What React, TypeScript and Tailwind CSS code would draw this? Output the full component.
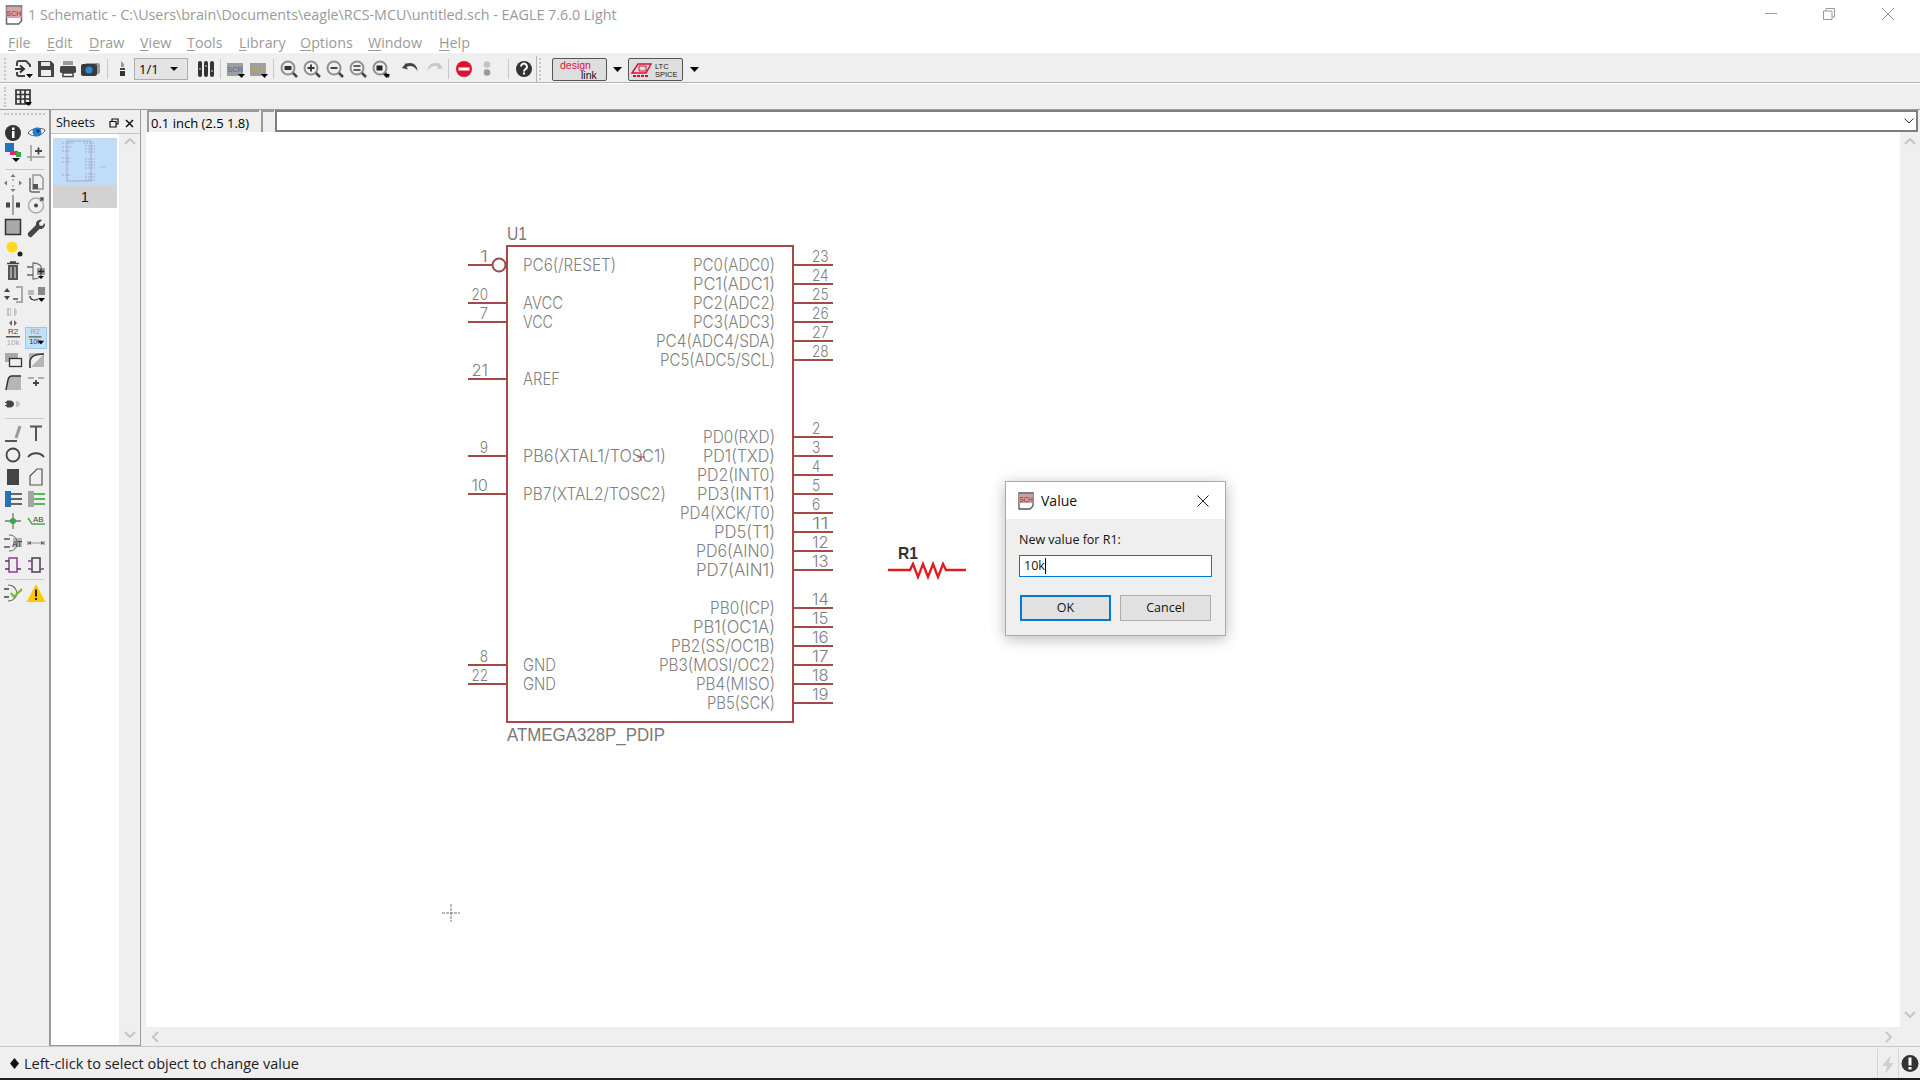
import React from 'react';

const ui = "font-['Open_Sans','Noto_Sans',sans-serif]";
const vec = "font-['Liberation_Sans',sans-serif]";
const thin = "font-['Inter','Liberation_Sans',sans-serif] font-light";

const leftLabels: [string, number, number][] = [
  ['PC6(/RESET)', 265, 93],
  ['AVCC', 303, 40],
  ['VCC', 322, 30],
  ['AREF', 379, 37],
  ['PB6(XTAL1/TOSC1)', 456, 143],
  ['PB7(XTAL2/TOSC2)', 494, 143],
  ['GND', 665, 33],
  ['GND', 684, 33],
];

const rightLabels: [string, number, number][] = [
  ['PC0(ADC0)', 265, 82],
  ['PC1(ADC1)', 284, 82],
  ['PC2(ADC2)', 303, 82],
  ['PC3(ADC3)', 322, 82],
  ['PC4(ADC4/SDA)', 341, 119],
  ['PC5(ADC5/SCL)', 360, 115],
  ['PD0(RXD)', 437, 72],
  ['PD1(TXD)', 456, 72],
  ['PD2(INT0)', 475, 78],
  ['PD3(INT1)', 494, 78],
  ['PD4(XCK/T0)', 513, 95],
  ['PD5(T1)', 532, 61],
  ['PD6(AIN0)', 551, 79],
  ['PD7(AIN1)', 570, 79],
  ['PB0(ICP)', 608, 65],
  ['PB1(OC1A)', 627, 82],
  ['PB2(SS/OC1B)', 646, 104],
  ['PB3(MOSI/OC2)', 665, 116],
  ['PB4(MISO)', 684, 79],
  ['PB5(SCK)', 703, 68],
];

const leftPins: [string, number][] = [
  ['1', 265], ['20', 303], ['7', 322], ['21', 379], ['9', 456], ['10', 494], ['8', 665], ['22', 684],
];

const rightPins: [string, number][] = [
  ['23', 265], ['24', 284], ['25', 303], ['26', 322], ['27', 341], ['28', 360],
  ['2', 437], ['3', 456], ['4', 475], ['5', 494], ['6', 513], ['11', 532], ['12', 551], ['13', 570],
  ['14', 608], ['15', 627], ['16', 646], ['17', 665], ['18', 684], ['19', 703],
];

const Ic = ({ children }: { children: React.ReactNode }) => (
  <svg width="22" height="22" viewBox="0 0 22 22" fill="none">
    {children}
  </svg>
);

const Drop = () => <path d="M13 16h7l-3.500 4z" fill="#000" />;

const Sep = () => <div className="w-px h-[20px] bg-[#c9c9c9] ml-[3px]" />;

const Cell = ({ children, className = '' }: { children: React.ReactNode; className?: string }) => (
  <div className={`w-[23px] h-[23px] flex items-center justify-center shrink-0 ${className}`}>{children}</div>
);

const ZoomIcon = ({ kind }: { kind: 'fit' | 'in' | 'out' | 'sel' | 'last' }) => (
  <Ic>
    <circle cx="10" cy="10" r="6.500" stroke="#8f8f8f" strokeWidth="2" />
    <path d="M15 15l4 4" stroke="#444" strokeWidth="2.500" />
    {kind === 'fit' && <rect x="6.500" y="8" width="7" height="4" fill="#333" />}
    {kind === 'in' && <path d="M6.500 10h7M10 6.500v7" stroke="#333" strokeWidth="1.800" />}
    {kind === 'out' && <path d="M6.500 10h7" stroke="#333" strokeWidth="1.800" />}
    {kind === 'sel' && <path d="M6.500 8h7M6.500 12h7" stroke="#333" strokeWidth="1.500" />}
    {kind === 'last' && (
      <>
        <rect x="6.500" y="7.500" width="6" height="5" fill="#222" />
        <Drop />
      </>
    )}
  </Ic>
);

const TopToolbar = () => (
  <div className="h-[29px] pt-[2px] bg-[#efefef] border-b border-[#b4b4b4] flex items-center pl-[4px]">
    <div className="w-[2px] h-[22px] border-l-2 border-dotted border-[#c6c6c6] mr-[6px]" />
    <Cell>
      <Ic>
        <path d="M4 8V5a2 2 0 0 1 2-2h7l4 4v2M4 14v2a2 2 0 0 0 2 2h6" stroke="#444" strokeWidth="2" />
        <path d="M2 11h8M7 7.500l4 3.500-4 3.500" stroke="#333" strokeWidth="2" />
        <Drop />
      </Ic>
    </Cell>
    <Cell className="-ml-px">
      <Ic>
        <path d="M3 3h13l3 3v13H3z" fill="#444" />
        <rect x="6" y="4" width="9" height="4" fill="#e8e8e8" />
        <rect x="6" y="12" width="10" height="6" fill="#efefef" />
      </Ic>
    </Cell>
    <Cell className="-ml-px">
      <Ic>
        <rect x="6" y="3" width="10" height="4" fill="#999" />
        <rect x="3" y="8" width="16" height="7" rx="1.500" fill="#444" />
        <rect x="6" y="15" width="10" height="3.500" fill="#fff" stroke="#444" strokeWidth="1.500" />
      </Ic>
    </Cell>
    <Cell className="-ml-px">
      <Ic>
        <rect x="6" y="5" width="15" height="11" rx="2" fill="#9a9a9a" />
        <rect x="2" y="6" width="16" height="12" rx="2" fill="#3a3a3a" />
        <circle cx="10" cy="12" r="3.500" fill="#1f8ce0" />
      </Ic>
    </Cell>
    <div className="w-px h-[20px] bg-[#c9c9c9] ml-[6px]" />
    <Cell className="ml-[2px]">
      <Ic>
        <path d="M10 3l3 3v3h-3z" fill="#9a9a9a" />
        <rect x="9" y="10" width="5" height="2" fill="#444" />
        <path d="M9 13h5v5H9z" fill="#333" />
      </Ic>
    </Cell>
    <div className="ml-[1px] w-[54px] h-[22px] bg-[#e4e4e4] border border-[#adadad] flex items-center justify-between pl-[4px] pr-[9px]">
      <span className={`${ui} text-[13px] text-black leading-none`}>1/1</span>
      <svg width="8" height="4" viewBox="0 0 8 4">
        <path d="M0 0h8L4 4z" fill="#111" />
      </svg>
    </div>
    <Cell className="ml-[6px]">
      <Ic>
        <rect x="3" y="3" width="4" height="16" rx="2" fill="#333" />
        <rect x="9" y="3" width="4" height="16" rx="2" fill="#333" />
        <rect x="15" y="3" width="4" height="16" rx="2" fill="#333" />
        <path d="M4 11h2M10 8h2M16 13h2" stroke="#ddd" strokeWidth="1" />
      </Ic>
    </Cell>
    <Sep />
    <Cell className="ml-[3px]">
      <Ic>
        <rect x="2" y="5" width="16" height="13" fill="#9e9e9e" />
        <text x="10" y="14" textAnchor="middle" className={`${vec} text-[7.500px] fill-[#1f6fc0]`}>SCR</text>
        <Drop />
      </Ic>
    </Cell>
    <Cell>
      <Ic>
        <rect x="2" y="5" width="16" height="13" fill="#9e9e9e" />
        <text x="10" y="14" textAnchor="middle" className={`${vec} text-[7.500px] fill-[#e89520]`}>ULP</text>
        <Drop />
      </Ic>
    </Cell>
    <Sep />
    <Cell className="ml-[3px]"><ZoomIcon kind="fit" /></Cell>
    <Cell><ZoomIcon kind="in" /></Cell>
    <Cell><ZoomIcon kind="out" /></Cell>
    <Cell><ZoomIcon kind="sel" /></Cell>
    <Cell><ZoomIcon kind="last" /></Cell>
    <Cell className="ml-[7px]">
      <Ic>
        <path d="M6 5l-4 5 6 1.500-1.500-2.500c4-2 8-1 11 4 0-6-5-9.500-11-7.500z" fill="#444" />
      </Ic>
    </Cell>
    <Cell>
      <Ic>
        <path d="M16 5l4 5-6 1.500 1.500-2.500c-4-2-8-1-11 4 0-6 5-9.500 11-7.500z" fill="#c8c8c8" />
      </Ic>
    </Cell>
    <Sep />
    <Cell className="ml-[3px]">
      <Ic>
        <circle cx="11" cy="11" r="8" fill="#e0122c" />
        <rect x="5.500" y="9.500" width="11" height="3" fill="#fff" />
      </Ic>
    </Cell>
    <Cell>
      <Ic>
        <circle cx="11" cy="6.500" r="3.300" fill="#c4c4c4" />
        <circle cx="11" cy="14.500" r="3.300" fill="#9a9a9a" />
      </Ic>
    </Cell>
    <div className="w-px h-[20px] bg-[#c9c9c9] ml-[10px]" />
    <Cell className="ml-[3px]">
      <Ic>
        <circle cx="11" cy="11" r="8" fill="#333" />
        <path d="M8 8.500a3 3 0 1 1 4.500 2.700c-1 .6-1.500 1-1.500 2.300" stroke="#fff" strokeWidth="2" />
        <rect x="10" y="14.500" width="2" height="2" fill="#fff" />
      </Ic>
    </Cell>
    <div className="w-px h-full bg-[#b4b4b4] ml-[1px]" />
    <div className="w-[2px] h-[22px] border-l-2 border-dotted border-[#c6c6c6] ml-[2px]" />
    <div className="ml-[11px] w-[55px] h-[23px] bg-[#dedede] border border-[#555] rounded-[2px] flex items-center justify-center">
      <svg width="42" height="21" viewBox="0 0 42 21">
        <text x="1" y="10" className={`${vec} text-[10.500px] fill-[#d6123c]`}>design</text>
        <text x="22" y="19.500" className={`${vec} text-[10.500px] fill-[#111]`}>link</text>
      </svg>
    </div>
    <svg width="9" height="5" viewBox="0 0 9 5" className="ml-[6px]">
      <path d="M0 0h9L4.500 5z" fill="#000" />
    </svg>
    <div className="ml-[6px] w-[55px] h-[23px] bg-[#dedede] border border-[#555] rounded-[2px] flex items-center">
      <svg width="53" height="21" viewBox="0 0 53 21" fill="none">
        <path d="M3 14l6-9h13l-5 9z" stroke="#d6123c" strokeWidth="1.500" />
        <path d="M10 7h7v5h-7z" stroke="#d6123c" />
        <path d="M4 17h3M8 17h3M12 17h3M16 17h3" stroke="#d6123c" strokeWidth="2" />
        <text x="26" y="10" className={`${vec} text-[7.500px] fill-[#222]`}>LTC</text>
        <text x="26" y="18" className={`${vec} text-[7.500px] fill-[#222]`}>SPICE</text>
      </svg>
    </div>
    <svg width="9" height="5" viewBox="0 0 9 5" className="ml-[7px]">
      <path d="M0 0h9L4.500 5z" fill="#000" />
    </svg>
  </div>
);

const SubToolbar = () => (
  <div className="h-[26px] mt-px bg-[#efefef] border-b border-[#9c9c9c] flex items-center pl-[4px]">
    <div className="w-[2px] h-[20px] border-l-2 border-dotted border-[#c6c6c6] mr-[5px]" />
    <Cell>
      <Ic>
        <path d="M4 4h14v14H4zM8.500 4v14M13 4v14M4 8.500h14M4 13h14" stroke="#333" strokeWidth="1.700" />
        <Drop />
      </Ic>
    </Cell>
  </div>
);

const ToolRow = ({ h = 'h-[22px]', children }: { h?: string; children: React.ReactNode }) => (
  <div className={`${h} flex items-center pl-[2px] gap-px`}>{children}</div>
);

const Tool = ({ children, active = false }: { children?: React.ReactNode; active?: boolean }) => (
  <div
    className={`w-[22px] h-[22px] flex items-center justify-center ${
      active ? 'bg-[#c4e0f9] border border-[#9fc8e8]' : ''
    }`}
  >
    {children}
  </div>
);

const ToolSep = ({ className = '' }: { className?: string }) => (
  <div className={`h-px mx-[5px] bg-[#c9c9c9] ${className}`} />
);

const LeftToolbar = () => (
  <div className="w-[51px] shrink-0 bg-[#efefef] border-r-2 border-[#9a9a9a] flex flex-col">
    <div className="h-[13px] pt-[3px] px-[4px]">
      <div className="h-[2px] border-t-2 border-dotted border-[#c6c6c6]" />
    </div>
    <ToolRow h="h-[20px]">
      <Tool>
        <Ic>
          <circle cx="11" cy="11" r="8" fill="#333" />
          <rect x="10" y="9" width="2.500" height="7" fill="#fff" />
          <rect x="10" y="5.500" width="2.500" height="2.500" fill="#fff" />
        </Ic>
      </Tool>
      <Tool>
        <Ic>
          <path d="M3 11c3-5 13-6 17-3-2 6-12 8-17 3z" fill="#fff" stroke="#555" />
          <circle cx="12" cy="10" r="4.500" fill="#1a7fd6" />
          <circle cx="13" cy="9" r="1.500" fill="#123" />
        </Ic>
      </Tool>
    </ToolRow>
    <ToolRow h="h-[19px]">
      <Tool>
        <Ic>
          <rect x="3" y="1" width="9" height="9" fill="#2472b8" />
          <rect x="8" y="9" width="8" height="4" fill="#d82a68" />
          <rect x="14" y="10" width="5" height="5" fill="#3aa648" />
          <path d="M10 16h8l-4 4z" fill="#000" />
        </Ic>
      </Tool>
      <Tool>
        <Ic>
          <path d="M6 3v16M2 15h18" stroke="#9a9a9a" strokeWidth="1.500" />
          <path d="M10 9h7M13.500 5.500v7" stroke="#444" strokeWidth="1.800" />
        </Ic>
      </Tool>
    </ToolRow>
    <ToolSep className="mt-[7px] mb-[2px]" />
    <ToolRow h="h-[22.100px]">
      <Tool>
        <Ic>
          <path d="M11 2l2.500 3h-5zM11 20l-2.500-3h5zM2 11l3-2.500v5zM20 11l-3 2.500v-5z" fill="#777" />
          <rect x="10" y="7" width="2" height="2" fill="#bbb" />
          <rect x="10" y="13" width="2" height="2" fill="#bbb" />
        </Ic>
      </Tool>
      <Tool>
        <Ic>
          <path d="M8 3h7l3 3v11H8z" stroke="#999" strokeWidth="1.500" />
          <path d="M5 6v12a2 2 0 0 0 2 2h8" stroke="#666" strokeWidth="1.500" />
          <rect x="8" y="12" width="5" height="5" fill="#555" />
        </Ic>
      </Tool>
    </ToolRow>
    <ToolRow h="h-[22.100px]">
      <Tool>
        <Ic>
          <path d="M11 1v20" stroke="#999" strokeWidth="1.800" />
          <rect x="4" y="8.500" width="4" height="5" fill="#444" />
          <rect x="14" y="8.500" width="4" height="5" fill="#444" />
        </Ic>
      </Tool>
      <Tool>
        <Ic>
          <circle cx="11" cy="11.500" r="7.500" stroke="#aaa" strokeWidth="1.500" />
          <circle cx="11" cy="11.500" r="2" fill="#444" />
          <path d="M15 7l3-3M15 4h3v3" stroke="#555" strokeWidth="1.300" />
        </Ic>
      </Tool>
    </ToolRow>
    <ToolRow h="h-[22.100px]">
      <Tool>
        <Ic>
          <rect x="3.500" y="3.500" width="15" height="15" fill="#a9a9a9" stroke="#333" strokeWidth="1.500" />
        </Ic>
      </Tool>
      <Tool>
        <Ic>
          <path d="M3 17l8-8c-.5-3 2-6 6-5l-3 3 .5 2.500 2.500.5 3-3c.5 4-2.500 6.500-5.500 6l-8 8c-1.500 1-4.500-1.500-3.500-4z" fill="#444" />
        </Ic>
      </Tool>
    </ToolRow>
    <ToolRow h="h-[22.100px]">
      <Tool>
        <Ic>
          <circle cx="10" cy="9" r="5.500" fill="#ffd91a" />
          <circle cx="18" cy="16" r="2.500" fill="#222" />
        </Ic>
      </Tool>
      <Tool />
    </ToolRow>
    <ToolRow h="h-[22.100px]">
      <Tool>
        <Ic>
          <path d="M6 5h10v15H6z" fill="#555" />
          <path d="M5 3.500h12M8 2h6" stroke="#444" strokeWidth="1.500" />
          <path d="M9 7v11M13 7v11" stroke="#eee" strokeWidth="1" />
        </Ic>
      </Tool>
      <Tool>
        <Ic>
          <path d="M8 3c6 0 9 3 9 8s-3 8-9 8z" stroke="#777" strokeWidth="1.300" />
          <path d="M2 7h6M2 15h6" stroke="#666" strokeWidth="1.300" />
          <rect x="12" y="8" width="8" height="7" fill="#9a9a9a" />
          <path d="M13 11.500h6M16 8.500v6" stroke="#222" strokeWidth="1.300" />
          <path d="M13 16h6l-3 3z" fill="#000" />
        </Ic>
      </Tool>
    </ToolRow>
    <ToolRow h="h-[22.100px]">
      <Tool>
        <Ic>
          <path d="M14 4h6v15h-6" stroke="#aaa" strokeWidth="2" />
          <path d="M5 5l3 4H2zM5 17l-3-4h6z" fill="#444" />
          <path d="M11 16h5" stroke="#777" strokeWidth="2" />
        </Ic>
      </Tool>
      <Tool>
        <Ic>
          <rect x="13" y="4" width="7" height="8" fill="#888" />
          <rect x="3" y="7" width="6" height="5" fill="#bbb" />
          <path d="M5 13c0 4 5 5 8 3" stroke="#333" strokeWidth="1.300" />
          <path d="M13 15h7l-3.500 4z" fill="#000" />
        </Ic>
      </Tool>
    </ToolRow>
    <ToolRow h="h-[22.100px]">
      <Tool>
        <Ic>
          <path d="M5 3h3v8H5zM12 3c4 1 4 7 0 8zM9 3c-3 1-3 7 0 8z" fill="#c4c4c4" />
          <path d="M10 15l-3 3 3 3zM12 15l3 3-3 3z" fill="#666" />
        </Ic>
      </Tool>
      <Tool />
    </ToolRow>
    <ToolRow h="h-[22.100px]">
      <Tool>
        <Ic>
          <text x="11" y="7" textAnchor="middle" className={`${vec} text-[8px] fill-[#444]`}>R2</text>
          <rect x="4" y="9" width="14" height="1.500" fill="#555" />
          <text x="11" y="18" textAnchor="middle" className={`${vec} text-[8px] fill-[#aaa]`}>10k</text>
        </Ic>
      </Tool>
      <Tool active>
        <Ic>
          <text x="10" y="7" textAnchor="middle" className={`${vec} text-[8px] fill-[#999]`}>R2</text>
          <rect x="3" y="9" width="14" height="1.500" fill="#666" />
          <text x="10" y="18" textAnchor="middle" className={`${vec} text-[8px] fill-[#333]`}>10k</text>
          <path d="M13 14h7l-3.500 4z" fill="#000" />
        </Ic>
      </Tool>
    </ToolRow>
    <ToolRow h="h-[22.100px]">
      <Tool>
        <Ic>
          <rect x="3" y="4" width="13" height="9" fill="#a9a9a9" />
          <rect x="7.500" y="9.500" width="12" height="8" fill="#efefef" stroke="#333" strokeWidth="1.300" />
        </Ic>
      </Tool>
      <Tool>
        <Ic>
          <path d="M4 4h15v14H4z" fill="#b5b5b5" />
          <path d="M5 19v-6c0-5 4-8 14-8" stroke="#333" strokeWidth="1.500" fill="#efefef" />
        </Ic>
      </Tool>
    </ToolRow>
    <ToolRow h="h-[22.100px]">
      <Tool>
        <Ic>
          <path d="M7 5h12v14H5z" fill="#b5b5b5" />
          <path d="M4 19l2-10c.5-2.500 2-4 4-4h9" stroke="#333" strokeWidth="1.500" />
        </Ic>
      </Tool>
      <Tool>
        <Ic>
          <path d="M3 7h6M13 7h6" stroke="#999" strokeWidth="1.300" />
          <path d="M8 12h6M11 9v6" stroke="#444" strokeWidth="1.800" />
        </Ic>
      </Tool>
    </ToolRow>
    <ToolRow h="h-[22.100px]">
      <Tool>
        <Ic>
          <path d="M5 8h3c3 0 3.500 2 3.500 3s-.5 3-3.500 3H5zM3 9.500h2M3 12.500h2" fill="#444" stroke="#444" />
          <path d="M14 8c3.500 0 4 2 4 3s-.5 3-4 3z" fill="#c4c4c4" />
        </Ic>
      </Tool>
      <Tool />
    </ToolRow>
    <ToolSep className="mt-[3px] mb-[3px]" />
    <ToolRow>
      <Tool>
        <Ic>
          <path d="M3 19h12" stroke="#444" strokeWidth="1.800" />
          <path d="M14 16l4-12" stroke="#999" strokeWidth="3" />
        </Ic>
      </Tool>
      <Tool>
        <Ic>
          <path d="M5 4.500h12M11 4.500V19" stroke="#555" strokeWidth="2" />
        </Ic>
      </Tool>
    </ToolRow>
    <ToolRow>
      <Tool>
        <Ic>
          <circle cx="11" cy="11" r="6.500" stroke="#444" strokeWidth="1.800" />
        </Ic>
      </Tool>
      <Tool>
        <Ic>
          <path d="M3 13c4-5 12-5 16 0" stroke="#444" strokeWidth="1.800" />
        </Ic>
      </Tool>
    </ToolRow>
    <ToolRow>
      <Tool>
        <Ic>
          <rect x="5" y="3" width="12" height="16" fill="#444" />
        </Ic>
      </Tool>
      <Tool>
        <Ic>
          <path d="M5 10l7-7h5v16H5z" stroke="#555" strokeWidth="1.200" />
        </Ic>
      </Tool>
    </ToolRow>
    <ToolRow>
      <Tool>
        <Ic>
          <rect x="3" y="3" width="6" height="16" fill="#2472b8" />
          <path d="M9 6h11M9 11h11M9 16h11" stroke="#666" strokeWidth="2" />
        </Ic>
      </Tool>
      <Tool>
        <Ic>
          <rect x="3" y="3" width="6" height="16" fill="#a5a5a5" />
          <path d="M9 6h11M9 11h11M9 16h11" stroke="#5bb658" strokeWidth="2" />
        </Ic>
      </Tool>
    </ToolRow>
    <ToolRow>
      <Tool>
        <Ic>
          <path d="M3 11h16M11 3v16" stroke="#777" strokeWidth="1.300" />
          <circle cx="11" cy="11" r="3" fill="#3aa648" />
        </Ic>
      </Tool>
      <Tool>
        <Ic>
          <path d="M3 8l4 6h13" stroke="#46ad4a" strokeWidth="1.500" />
          <text x="8" y="11.500" className={`${vec} text-[8px] fill-[#444]`}>AB</text>
        </Ic>
      </Tool>
    </ToolRow>
    <ToolRow>
      <Tool>
        <Ic>
          <rect x="11" y="6" width="9" height="9" fill="#b5b5b5" />
          <path d="M7 3c5 0 8 3 8 8s-3 8-8 8" stroke="#666" strokeWidth="1" />
          <path d="M2 7h6M2 15h6" stroke="#555" strokeWidth="1.300" />
          <text x="10" y="15" className={`${vec} text-[8.500px] fill-[#333]`}>AT</text>
        </Ic>
      </Tool>
      <Tool>
        <Ic>
          <path d="M3 9v4M19 9v4" stroke="#777" />
          <path d="M3 11h16" stroke="#999" strokeWidth="1" />
          <path d="M3 11l3-2v4zM19 11l-3-2v4z" fill="#666" />
        </Ic>
      </Tool>
    </ToolRow>
    <ToolRow>
      <Tool>
        <Ic>
          <rect x="7" y="4" width="8" height="14" stroke="#8e3f96" strokeWidth="1.500" />
          <path d="M3 7h4M3 15h4M15 15h4" stroke="#444" strokeWidth="1.500" />
        </Ic>
      </Tool>
      <Tool>
        <Ic>
          <rect x="7" y="4" width="8" height="14" stroke="#444" strokeWidth="1.500" />
          <path d="M3 7h4M3 15h4M15 15h4" stroke="#8e3f96" strokeWidth="1.500" />
        </Ic>
      </Tool>
    </ToolRow>
    <ToolSep className="mt-[3px] mb-[2px]" />
    <ToolRow>
      <Tool>
        <Ic>
          <path d="M6 3c5 0 8 3 9 8-1 5-4 8-9 8" stroke="#666" strokeWidth="1.200" />
          <path d="M2 7h5M2 15h5" stroke="#444" strokeWidth="1.300" />
          <path d="M9 11l3 4 8-8" stroke="#7ab832" strokeWidth="2.200" />
        </Ic>
      </Tool>
      <Tool>
        <Ic>
          <path d="M11 2l9.500 18h-19z" fill="#ffc800" />
          <rect x="10" y="7.500" width="2" height="7" fill="#222" />
          <rect x="10" y="16" width="2" height="2" fill="#222" />
        </Ic>
      </Tool>
    </ToolRow>
  </div>
);

const Chevron = ({ dir }: { dir: 'up' | 'down' | 'left' | 'right' }) => {
  const d = {
    up: 'M1 7l5-5 5 5',
    down: 'M1 2l5 5 5-5',
    left: 'M8 1L3 6l5 5',
    right: 'M4 1l5 5-5 5',
  }[dir];
  return (
    <svg width="12" height="12" viewBox="0 0 12 12" fill="none">
      <path d={d} stroke="#c6c6c6" strokeWidth="2" />
    </svg>
  );
};

const SheetsPanel = () => (
  <div className="w-[90px] shrink-0 flex flex-col bg-[#efefef] border-r border-[#9a9a9a]">
    <div className="h-[24px] pt-[3px] border-b border-[#c4c4c4] flex items-center pl-[5px] pr-[6px] justify-between">
      <span className={`${ui} text-[12.500px] text-[#111]`}>Sheets</span>
      <div className="flex items-center gap-[6px]">
        <svg width="10" height="10" viewBox="0 0 10 10" fill="none">
          <path d="M3 3V1h6v5H7M1 3.500h6V9H1z" stroke="#111" strokeWidth="1.200" />
        </svg>
        <svg width="9" height="9" viewBox="0 0 9 9" fill="none">
          <path d="M1 1l7 7M8 1L1 8" stroke="#111" strokeWidth="1.500" />
        </svg>
      </div>
    </div>
    <div className="flex-1 flex border-b border-[#9a9a9a]">
      <div className="w-[68px] bg-white pt-[4px] px-[2px]">
        <div className="w-[64px] h-[47px] bg-[#bfdcf8] flex items-start justify-center">
          <svg width="64" height="47" viewBox="0 0 64 47" fill="none">
            <rect x="14" y="3" width="24" height="40" stroke="#a6a6d0" />
            <path d="M9 5h12M9 9h10M9 13h8M9 20h9M9 24h9M9 37h8M30 5h12M32 8h10M32 11h10M32 14h10M32 21h10M32 24h10M32 27h10M32 30h10M32 36h10M32 39h10M32 42h10M47 29h6" stroke="#a6a6d0" strokeWidth="1" strokeDasharray="2 1" />
          </svg>
        </div>
        <div className={`${vec} w-[64px] h-[23px] pt-[2px] bg-[#d2d2d2] flex items-center justify-center text-[14px] text-[#111]`}>
          1
        </div>
      </div>
      <div className="flex-1 flex flex-col justify-between items-center py-[3px]">
        <Chevron dir="up" />
        <Chevron dir="down" />
      </div>
    </div>
  </div>
);

const CommandBar = () => (
  <div className="h-[22px] flex items-stretch pl-[6px] pr-[2px] shrink-0">
    <div className={`${ui} w-[112px] pt-[2px] border-l-2 border-t-2 border-[#9a9a9a] text-[13px] leading-none text-black flex items-center pl-[2px]`}>
      0.1 inch (2.5 1.8)
    </div>
    <div className="w-[13px] ml-[2px] border-l-2 border-t-2 border-[#9a9a9a]" />
    <div className="flex-1 ml-px bg-white border-2 border-[#7e7e7e] flex items-center justify-end pr-[2px]">
      <svg width="10" height="6" viewBox="0 0 10 6" fill="none">
        <path d="M0.500 0.500L5 5l4.500-4.500" stroke="#333" />
      </svg>
    </div>
  </div>
);

const Schematic = () => (
  <svg className="w-full h-full bg-white block" viewBox="146 132 1754 895" preserveAspectRatio="xMinYMin slice" fill="none">
    <rect x="507" y="246" width="286" height="476" stroke="#a54848" strokeWidth="2" />
    <circle cx="499" cy="265" r="6.500" stroke="#a54848" strokeWidth="2" />
    <path d="M468 265h24" stroke="#a54848" strokeWidth="2" />
    {leftPins.slice(1).map(([n, y]) => (
      <path key={n} d={`M468 ${y}h39`} stroke="#a54848" strokeWidth="2" />
    ))}
    {rightPins.map(([n, y]) => (
      <path key={n} d={`M793 ${y}h40`} stroke="#a54848" strokeWidth="2" />
    ))}
    {leftPins.map(([n, y]) => (
      <text key={n} x="488" y={y - 3} textAnchor="end" textLength={n.length * 8.300} lengthAdjust="spacingAndGlyphs" className={`${thin} text-[16.500px] fill-[#808080]`}>
        {n}
      </text>
    ))}
    {rightPins.map(([n, y]) => (
      <text key={n} x="812" y={y - 3} textLength={n.length * 8.300} lengthAdjust="spacingAndGlyphs" className={`${thin} text-[16.500px] fill-[#808080]`}>
        {n}
      </text>
    ))}
    {leftLabels.map(([t, y, w]) => (
      <text key={`${t}${y}`} x="523" y={y + 5.500} textLength={w} lengthAdjust="spacingAndGlyphs" className={`${thin} text-[17.500px] fill-[#808080]`}>
        {t}
      </text>
    ))}
    {rightLabels.map(([t, y, w]) => (
      <text key={t} x={775 - w} y={y + 5.500} textLength={w} lengthAdjust="spacingAndGlyphs" className={`${thin} text-[17.500px] fill-[#808080]`}>
        {t}
      </text>
    ))}
    <text x="507" y="240" textLength="20" lengthAdjust="spacingAndGlyphs" className={`${vec} text-[17.500px] fill-[#7a7a7a]`}>U1</text>
    <text x="507" y="741" textLength="158" lengthAdjust="spacingAndGlyphs" className={`${vec} text-[17.500px] fill-[#7a7a7a]`}>ATMEGA328P_PDIP</text>
    <path d="M637 457h8M641 453v8" stroke="#a54848" />
    <path d="M888 570h22l3-6 5 13 5-13 5 13 5-13 5 13 5-13 3 6h20" stroke="#e01c22" strokeWidth="2.400" />
    <text x="898" y="559" textLength="20" lengthAdjust="spacingAndGlyphs" className={`${vec} text-[17px] font-bold fill-[#333]`}>R1</text>
    <path d="M442 913h18M451 904v18" stroke="#777" strokeDasharray="3 1" />
  </svg>
);

const ValueDialog = () => (
  <div className="absolute left-[1005px] top-[481px] w-[221px] h-[155px] bg-[#efefef] border border-[#b0a8a0] shadow-[0_3px_14px_rgba(0,0,0,0.28)] flex flex-col">
    <div className="h-[37px] bg-white flex items-center pl-[12px] pr-[16px] shrink-0">
      <svg width="16" height="18" viewBox="0 0 16 18">
        <path d="M1 1h14v13l-3 3H1z" fill="#fff" stroke="#555" strokeWidth="1.300" />
        <rect x="1" y="2" width="14" height="9" fill="#c8a0a4" />
        <text x="8" y="9.500" textAnchor="middle" className={`${vec} text-[6.500px] fill-[#b01c2c]`}>SCH</text>
      </svg>
      <span className={`${ui} ml-[7px] text-[14px] text-[#111] flex-1`}>Value</span>
      <svg width="12" height="12" viewBox="0 0 12 12" fill="none">
        <path d="M0.500 0.500l11 11M11.500 0.500l-11 11" stroke="#222" />
      </svg>
    </div>
    <div className={`${ui} px-[13px] pt-[15px] text-[12.500px] text-[#111] leading-none`}>
      <div className="h-[13px] flex items-center">New value for R1:</div>
      <div className="mt-[8px] h-[22px] w-[193px] bg-white border border-[#0078d7] flex items-center pl-[4px]">
        10k<span className="w-px h-[16px] bg-black" />
      </div>
      <div className="mt-[18px] flex gap-[9px] pl-px">
        <div className="w-[91px] h-[26px] pt-px bg-[#e1e1e1] border-2 border-[#0078d7] flex items-center justify-center">OK</div>
        <div className="w-[91px] h-[26px] pt-px bg-[#e1e1e1] border border-[#adadad] flex items-center justify-center">Cancel</div>
      </div>
    </div>
  </div>
);

const Menu = ({ label, x }: { label: string; x: string }) => (
  <span className={x}>
    <span className="underline underline-offset-2">{label[0]}</span>
    {label.slice(1)}
  </span>
);

const App = () => {
  return (
    <div className={`${ui} relative w-[1920px] h-[1080px] overflow-hidden bg-white flex flex-col`}>
      <div className="h-[30px] shrink-0 flex items-center pl-[5px]">
        <svg width="18" height="20" viewBox="0 0 18 20">
          <path d="M1.500 1h15v15l-3 3h-12z" fill="#fff" stroke="#666" strokeWidth="1.500" />
          <rect x="1.500" y="2" width="15" height="11" fill="#d6a3a6" />
          <text x="9" y="11" textAnchor="middle" className={`${vec} text-[7px] fill-[#b01c2c]`}>SCH</text>
        </svg>
        <span className="ml-[5px] text-[14.300px] text-[#9a9a9a] whitespace-nowrap">
          1 Schematic - C:\Users\brain\Documents\eagle\RCS-MCU\untitled.sch - EAGLE 7.6.0 Light
        </span>
        <div className="ml-auto flex items-center pr-[26px] -mt-[3px]">
          <svg width="12" height="2" viewBox="0 0 12 2" className="mr-[46px]">
            <rect width="12" height="1" fill="#999" />
          </svg>
          <svg width="12" height="12" viewBox="0 0 12 12" fill="none" className="mr-[47px]">
            <path d="M0.500 3h8.500v8.500H0.500zM3 3V0.500h8.500V9H9" stroke="#999" />
          </svg>
          <svg width="12" height="12" viewBox="0 0 12 12" fill="none">
            <path d="M0 0l12 12M12 0L0 12" stroke="#999" />
          </svg>
        </div>
      </div>
      <div className="h-[24px] pt-[2px] shrink-0 flex items-center pl-[8px] text-[14.300px] text-[#9a9a9a] border-b border-[#f2f2f2]">
        <Menu label="File" x="w-[39px]" />
        <Menu label="Edit" x="w-[42px]" />
        <Menu label="Draw" x="w-[51px]" />
        <Menu label="View" x="w-[47px]" />
        <Menu label="Tools" x="w-[52px]" />
        <Menu label="Library" x="w-[61px]" />
        <Menu label="Options" x="w-[68px]" />
        <Menu label="Window" x="w-[71px]" />
        <Menu label="Help" x="" />
      </div>
      <TopToolbar />
      <SubToolbar />
      <div className="flex-1 min-h-0 flex">
        <LeftToolbar />
        <SheetsPanel />
        <div className="flex-1 min-w-0 flex flex-col bg-[#efefef]">
          <CommandBar />
          <div className="flex-1 min-h-0 flex pl-[5px]">
            <div className="flex-1 min-w-0">
              <Schematic />
            </div>
            <div className="w-[20px] flex flex-col justify-between items-center py-[5px]">
              <Chevron dir="up" />
              <Chevron dir="down" />
            </div>
          </div>
          <div className="h-[19px] shrink-0 flex items-center justify-between pl-[9px] pr-[26px]">
            <Chevron dir="left" />
            <Chevron dir="right" />
          </div>
        </div>
      </div>
      <div className="h-[32px] pt-[2px] shrink-0 bg-[#efefef] border-t border-[#c8c8c8] flex items-center pl-[10px] text-[14.500px] text-[#222]">
        <svg width="9" height="11" viewBox="0 0 9 11">
          <path d="M4.500 0L9 5.500 4.500 11 0 5.500z" fill="#111" />
        </svg>
        <span className="ml-[5px]">Left-click to select object to change value</span>
        <div className="ml-auto flex items-center h-full">
          <div className="w-px h-full bg-[#d4d4d4]" />
          <svg width="20" height="20" viewBox="0 0 20 20">
            <path d="M13 1L4 12h5l-2 8 9-11h-5z" fill="#cfcfcf" />
          </svg>
          <div className="w-px h-full bg-[#d4d4d4]" />
          <svg width="21" height="21" viewBox="0 0 21 21">
            <circle cx="11" cy="10.500" r="8.500" fill="#333" />
            <rect x="9.500" y="4.500" width="3" height="8" fill="#fff" />
            <rect x="9.500" y="14" width="3" height="2.500" fill="#fff" />
          </svg>
        </div>
      </div>
      <div className="h-[2px] shrink-0 bg-[#1f1f1f]" />
      <ValueDialog />
    </div>
  );
};

export default App;
